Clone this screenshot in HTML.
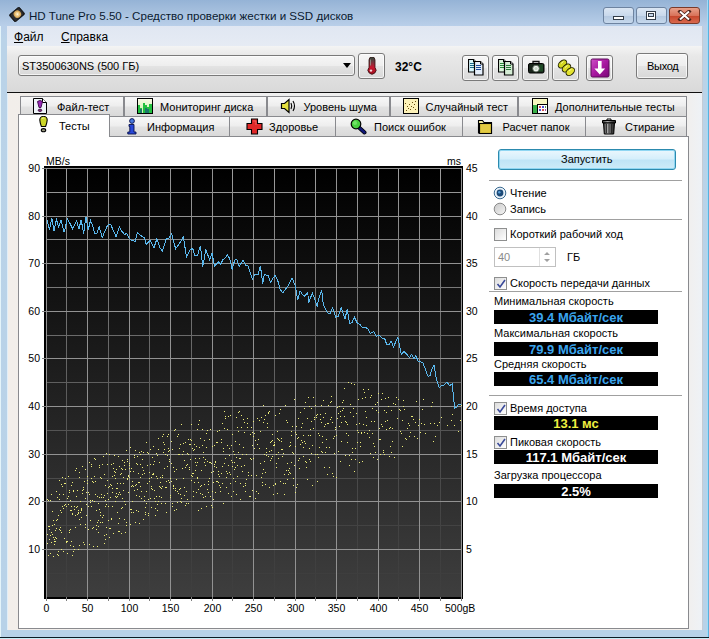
<!DOCTYPE html>
<html><head><meta charset="utf-8">
<style>
*{margin:0;padding:0;box-sizing:border-box}
html,body{width:709px;height:639px;overflow:hidden;background:#b9cde3;font-family:"Liberation Sans",sans-serif;font-size:11px;color:#000}
.a{position:absolute}
.t{position:absolute;white-space:nowrap;line-height:1}
#frame{left:0;top:0;width:709px;height:639px;background:linear-gradient(#95b3d6,#a6c0de 12px,#b9cfe9 26px,#bad3e8 40px,#b8d2e8)}
#client{left:7px;top:26px;width:695px;height:604px;background:linear-gradient(90deg,#e0eef8 1px,#f2eeea 1px,#f0f0f0 30%,#f0f0f0 70%,#f2eeea 97%,#eef2f6)}
#menubar{left:0;top:0;width:695px;height:20px;background:linear-gradient(#e0e7f2,#e6ebf4)}
#toolbar{left:0;top:20px;width:695px;height:46px;background:linear-gradient(#f4f4f4,#e8e8e8 10px,#d9d9d9)}
#dline{left:0;top:66px;width:695px;height:1px;background:#101010}
.btn{position:absolute;border:1px solid #7a7a7a;border-radius:3px;background:linear-gradient(#f6f6f6 0,#eeeeee 50%,#e4e4e4 51%,#d8d8d8 100%);box-shadow:inset 0 0 0 1px rgba(255,255,255,.7)}
.tab{position:absolute;border:1px solid #898a8e;border-bottom:none;background:linear-gradient(#f8f8f8,#eeeeee 45%,#e2e2e2 55%,#d9d9d9)}
.tab span{position:absolute;top:3.5px;white-space:nowrap}
.tab svg{position:absolute;top:1px}
#panel{left:18px;top:136px;width:671px;height:493px;background:#fff;border:1px solid #898a8e}
.sep{position:absolute;height:1px;background:#a0a0a0}
.blk{position:absolute;background:#000;color:#3aa5ee;font-weight:bold;font-size:13px;text-align:center;line-height:15px}
.cb{position:absolute;width:13px;height:13px;border:1px solid #8e8f8f;background:linear-gradient(135deg,#dcdcdc,#fff)}
</style></head><body>
<div id="frame" class="a"></div>
<div class="a" style="left:0;top:637px;width:709px;height:1px;background:#0c1c24"></div>
<div class="a" style="left:0;top:638px;width:709px;height:1px;background:#c8eef8"></div>
<div class="a" style="left:702px;top:26px;width:1px;height:604px;background:#c4ccd6"></div>
<div class="a" style="left:707px;top:0;width:1px;height:637px;background:#a0dcf8"></div>
<div class="a" style="left:708px;top:0;width:1px;height:637px;background:#5cb0dc"></div>
<div class="a" style="left:0;top:26px;width:1px;height:611px;background:#e4f4fa"></div>
<!-- title bar -->
<svg class="a" style="left:9px;top:7px" width="16" height="15" viewBox="0 0 16 15">
<g transform="rotate(-40 8 7.5)"><rect x="1.5" y="2.8" width="13" height="9.4" rx="1.2" fill="#1c1c1c" stroke="#000" stroke-width=".6"/>
<rect x="2.5" y="3.6" width="11" height="7.8" rx="1" fill="#2e2e30"/>
<circle cx="8.5" cy="7.5" r="3.7" fill="#d9a85a"/><circle cx="8.5" cy="7.5" r="2.4" fill="#f0d090"/><circle cx="8.5" cy="7.5" r=".9" fill="#fff6e0"/></g></svg>
<div class="t" style="left:29px;top:10px;font-size:11.6px;color:#0a1a30">HD Tune Pro 5.50 - Средство проверки жестки и SSD дисков</div>

<div class="a" style="left:603px;top:7px;width:31px;height:17px;border:1px solid #6d83a0;border-radius:3px;background:linear-gradient(#dbe6f3,#c9d9ec 50%,#b4c8e0 51%,#c6d8ec)"></div>
<div class="a" style="left:613px;top:16px;width:11px;height:4px;background:#fff;border:1px solid #333c48"></div>
<div class="a" style="left:636px;top:7px;width:31px;height:17px;border:1px solid #6d83a0;border-radius:3px;background:linear-gradient(#dbe6f3,#c9d9ec 50%,#b4c8e0 51%,#c6d8ec)"></div>
<div class="a" style="left:646px;top:11px;width:10px;height:9px;border:1px solid #333c48;background:#fff"></div>
<div class="a" style="left:648px;top:13px;width:6px;height:4px;border:1px solid #333c48;background:#c9d9ec"></div>
<div class="a" style="left:669px;top:7px;width:31px;height:17px;border:1px solid #7a3a2a;border-radius:3px;background:linear-gradient(#e8a08a,#d9735a 50%,#c5442a 51%,#d9694e)"></div>
<svg class="a" style="left:677px;top:10px" width="15" height="11" viewBox="0 0 15 11"><path d="M3 1.5 L12 9.5 M12 1.5 L3 9.5" stroke="#4a2018" stroke-width="3.6" stroke-linecap="square"/><path d="M3 1.5 L12 9.5 M12 1.5 L3 9.5" stroke="#fff" stroke-width="2"/></svg>

<div id="client" class="a">
  <div id="menubar" class="a">
    <div class="t" style="left:7px;top:5px;font-size:12px"><u>Ф</u>айл</div>
    <div class="t" style="left:54px;top:5px;font-size:12px"><u>С</u>правка</div>
  </div>
  <div id="toolbar" class="a"></div>
  <div id="dline" class="a"></div>
</div>
<div class="btn" style="left:18px;top:55px;width:337px;height:21px;border-color:#7a7a7a"></div><div class="t" style="left:22px;top:61px">ST3500630NS (500 ГБ)</div><svg class="a" style="left:343px;top:63px" width="9" height="6"><path d="M0 0H8L4 5z" fill="#000"/></svg><div class="btn" style="left:358px;top:53px;width:27px;height:26px"><svg class="a" style="left:8px;top:3px" width="10" height="18" viewBox="0 0 10 18"><defs><linearGradient id="thg" x1="0" y1="0" x2="0" y2="1"><stop offset="0" stop-color="#2a4a3a"/><stop offset=".25" stop-color="#6a3a40"/><stop offset=".6" stop-color="#c81830"/><stop offset="1" stop-color="#a01020"/></linearGradient></defs><path d="M2 3a3 3 0 0 1 6 0v7.5a4 4 0 1 1-6 0z" fill="url(#thg)" stroke="#301010" stroke-width=".8"/><path d="M3.5 2.5v6" stroke="#a0c0b0" stroke-width="1" opacity=".6"/><circle cx="4" cy="13.6" r="1.2" fill="#fff" opacity=".85"/></svg></div><div class="t" style="left:395px;top:61px;font-size:12px;font-weight:bold">32°C</div><div class="btn" style="left:462px;top:55px;width:27px;height:26px"><svg class="a" style="left:5px;top:3px" width="17" height="17" viewBox="0 0 17 17"><path d="M0.5 0.5h5l2.5 2.5v10h-7.5z" fill="#d8f6fc" stroke="#000" stroke-width="1.2"/><path d="M5.5 0.5v2.5h2.5" fill="#fff" stroke="#000" stroke-width="1"/><path d="M2 4.5h4" stroke="#1a6a8a" stroke-width="1"/><path d="M2 6.5h4" stroke="#1a6a8a" stroke-width="1"/><path d="M2 8.5h4" stroke="#1a6a8a" stroke-width="1"/><path d="M6.5 2.5h6l2.5 2.5v11h-8.5z" fill="#e4eefa" stroke="#000" stroke-width="1.2"/><path d="M12.5 2.5v2.5h2.5" fill="#fff" stroke="#000" stroke-width="1"/><path d="M8 6.5h5" stroke="#1a4a9a" stroke-width="1"/><path d="M8 8.5h5" stroke="#1a4a9a" stroke-width="1"/><path d="M8 10.5h5" stroke="#1a4a9a" stroke-width="1"/></svg></div><div class="btn" style="left:492px;top:55px;width:27px;height:26px"><svg class="a" style="left:5px;top:3px" width="17" height="17" viewBox="0 0 17 17"><path d="M0.5 0.5h5l2.5 2.5v10h-7.5z" fill="#dcf6dc" stroke="#000" stroke-width="1.2"/><path d="M5.5 0.5v2.5h2.5" fill="#fff" stroke="#000" stroke-width="1"/><path d="M2 4.5h4" stroke="#2a8a3a" stroke-width="1"/><path d="M2 6.5h4" stroke="#2a8a3a" stroke-width="1"/><path d="M2 8.5h4" stroke="#2a8a3a" stroke-width="1"/><path d="M6.5 2.5h6l2.5 2.5v11h-8.5z" fill="#d4ecd4" stroke="#000" stroke-width="1.2"/><path d="M12.5 2.5v2.5h2.5" fill="#fff" stroke="#000" stroke-width="1"/><path d="M8 6.5h5" stroke="#2a7a3a" stroke-width="1"/><path d="M8 8.5h5" stroke="#2a7a3a" stroke-width="1"/><path d="M8 10.5h5" stroke="#2a7a3a" stroke-width="1"/></svg></div><div class="btn" style="left:522px;top:55px;width:27px;height:26px"><svg class="a" style="left:5px;top:4px" width="17" height="14" viewBox="0 0 17 14"><path d="M5 3.5v-2h6v2" fill="none" stroke="#111" stroke-width="1.3"/><rect x="0.5" y="3.5" width="15.5" height="9.5" rx="1.5" fill="#18241a" stroke="#000"/><rect x="11" y="4.5" width="4" height="7" fill="#1e4a26"/><circle cx="8" cy="8.6" r="3.3" fill="#f0f4f0" stroke="#506050" stroke-width=".8"/><circle cx="8" cy="8.6" r="1.6" fill="#c8d8c8"/></svg></div><div class="btn" style="left:552px;top:55px;width:27px;height:26px"><svg class="a" style="left:4px;top:3px" width="19" height="18" viewBox="0 0 19 18"><g stroke="#202000" stroke-width="1"><ellipse cx="5.5" cy="5" rx="4.8" ry="3.2" transform="rotate(-40 5.5 5)" fill="#d4d820"/><ellipse cx="9.5" cy="9" rx="4.8" ry="3.2" transform="rotate(-40 9.5 9)" fill="#dcde28"/><ellipse cx="13.3" cy="12.6" rx="4.8" ry="3.2" transform="rotate(-40 13.3 12.6)" fill="#e4e430"/></g><path d="M4 4.5l2.5-2M8 8.5l2.5-2M12 12l2.5-2" stroke="#f8f8a0" stroke-width="1"/></svg></div><div class="btn" style="left:586px;top:55px;width:27px;height:26px"><svg class="a" style="left:3px;top:2px" width="20" height="20" viewBox="0 0 20 20"><defs><linearGradient id="pg" x1="0" y1="0" x2="1" y2="1"><stop offset="0" stop-color="#d050c8"/><stop offset=".5" stop-color="#a818a0"/><stop offset="1" stop-color="#7a0878"/></linearGradient></defs><rect x="1" y="1" width="18" height="18" rx="1.5" fill="url(#pg)" stroke="#5a0a58" stroke-width="1"/><path d="M8 3h3.6v7.5h3.6l-5.4 6-5.4-6h3.6z" fill="#fff"/></svg></div><div class="btn" style="left:636px;top:53px;width:52px;height:26px"><div class="t" style="left:10px;top:6.5px;letter-spacing:-0.3px">Выход</div></div>
<div id="panel" class="a"></div>
<div class="tab" style="left:20px;top:96px;width:104px;height:20px;"><svg style="left:12px;top:1px" width="15" height="16" viewBox="0 0 15 16"><path d="M0.5 0.5h9l4 4v11h-13z" fill="#eef4f8" stroke="#000"/><path d="M9.5 0.5v4h4" fill="#fff" stroke="#000"/><path d="M4.5 3.5q2.5-2 5 0l-1.5 6h-2z" fill="#9a2ab8" stroke="#3a0848" stroke-width=".9"/><ellipse cx="7" cy="12.3" rx="1.8" ry="1.2" fill="#7a3a6a" stroke="#3a0848" stroke-width=".8"/></svg><span style="left:36px">Файл-тест</span></div><div class="tab" style="left:124px;top:96px;width:143px;height:20px;"><svg style="left:12px;top:1px" width="16" height="16" viewBox="0 0 16 16" shape-rendering="crispEdges"><defs><linearGradient id="mg" x1="0" y1="0" x2="0" y2="1"><stop offset="0" stop-color="#fafae8"/><stop offset="1" stop-color="#c8f0a8"/></linearGradient></defs><rect x="0.5" y="0.5" width="15" height="15" fill="url(#mg)" stroke="#000"/><path d="M1 15V7h2v8zM3 15V10h2v5zM6 15V5h2v10zM8 15V7h2v8zM10 15V9h2v6zM12 15V6h3v9z" fill="#22c040"/><path d="M3 15v-4h2v4zM8 15v-5h2v5zM10 15v-4h2v4z" fill="#1a7a6a"/></svg><span style="left:35px">Мониторинг диска</span></div><div class="tab" style="left:267px;top:96px;width:123px;height:20px;"><svg style="left:12px;top:1px" width="17" height="16" viewBox="0 0 17 16"><path d="M1.5 5.5h3l4.5-4v13l-4.5-4h-3z" fill="#e4e040" stroke="#000" stroke-width="1.2"/><path d="M11 5q1.5 3 0 6M13 3q3 5 0 10" stroke="#000" stroke-width="1.1" fill="none"/></svg><span style="left:35.5px">Уровень шума</span></div><div class="tab" style="left:390px;top:96px;width:128px;height:20px;"><svg style="left:12px;top:1px" width="16" height="16" viewBox="0 0 16 16" shape-rendering="crispEdges"><rect x="0.5" y="0.5" width="15" height="15" fill="#fdf2b8" stroke="#000"/><g fill="#6a5010"><rect x="3" y="12" width="1" height="1"/><rect x="5" y="10" width="1" height="1"/><rect x="4" y="8" width="1" height="1"/><rect x="7" y="11" width="1" height="1"/><rect x="8" y="8" width="1" height="1"/><rect x="6" y="6" width="1" height="1"/><rect x="10" y="9" width="1" height="1"/><rect x="11" y="6" width="1" height="1"/><rect x="9" y="4" width="1" height="1"/><rect x="12" y="3" width="1" height="1"/><rect x="12" y="11" width="1" height="1"/><rect x="2" y="5" width="1" height="1"/></g></svg><span style="left:34.5px">Случайный тест</span></div><div class="tab" style="left:518px;top:96px;width:169px;height:20px;"><svg style="left:13px;top:1px" width="16" height="16" viewBox="0 0 16 16" shape-rendering="crispEdges"><rect x="0.5" y="0.5" width="15" height="15" fill="#f6f6c0" stroke="#000"/><rect x="1" y="7" width="5" height="8" fill="#38b048"/><rect x="5" y="6" width="10" height="9" fill="#fff" stroke="#000"/><g><rect x="7" y="8" width="2" height="2" fill="#d05050"/><rect x="10" y="8" width="2" height="2" fill="#5050d0"/><rect x="13" y="8" width="1" height="2" fill="#50a050"/><rect x="7" y="11" width="2" height="2" fill="#5050d0"/><rect x="10" y="11" width="2" height="2" fill="#d05050"/><rect x="13" y="11" width="1" height="2" fill="#a050a0"/></g></svg><span style="left:36px">Дополнительные тесты</span></div><div class="tab" style="left:109px;top:116px;width:121px;height:20px;"><svg style="left:17px;top:1px" width="10" height="17" viewBox="0 0 10 17"><circle cx="5" cy="3" r="2.4" fill="#4a7ae0" stroke="#08104a" stroke-width=".9"/><path d="M2 6.5h5v7.5h2v2H0.8v-2h2v-5.5H2z" fill="#2848d8" stroke="#08104a" stroke-width=".9"/></svg><span style="left:37px">Информация</span></div><div class="tab" style="left:229px;top:116px;width:107px;height:20px;"><svg style="left:16px;top:1px" width="17" height="17" viewBox="0 0 17 17"><path d="M5.5 1h6v4.5H16v6h-4.5V16h-6v-4.5H1v-6h4.5z" fill="#e02828" stroke="#000" stroke-width="1.1"/><path d="M7 3h3v4" stroke="#ff8080" stroke-width="1" fill="none" opacity=".6"/></svg><span style="left:39px">Здоровье</span></div><div class="tab" style="left:335px;top:116px;width:128px;height:20px;"><svg style="left:14px;top:1px" width="17" height="17" viewBox="0 0 17 17"><path d="M9 9.5l5.5 5" stroke="#000" stroke-width="4" stroke-linecap="round"/><path d="M9 9.5l5.5 5" stroke="#101878" stroke-width="2.4" stroke-linecap="round"/><circle cx="6" cy="6" r="4.8" fill="#48d040" stroke="#000" stroke-width="1.2"/><circle cx="5" cy="5" r="2" fill="#90f080" opacity=".6"/></svg><span style="left:38px">Поиск ошибок</span></div><div class="tab" style="left:462px;top:116px;width:124px;height:20px;"><svg style="left:14px;top:1px" width="16" height="17" viewBox="0 0 16 17"><path d="M1.5 2.5h4l1.5 2h7.5v10.5h-13z" fill="#f0e8a0" stroke="#000" stroke-width="1.1"/><path d="M2.5 15.5v-10h12v10z" fill="#d8c038" stroke="#000" stroke-width="1.1"/><rect x="4" y="7" width="9" height="7" fill="#e8d048" opacity=".7"/></svg><span style="left:39.5px">Расчет папок</span></div><div class="tab" style="left:585px;top:116px;width:102px;height:20px;"><svg style="left:16px;top:1px" width="14" height="17" viewBox="0 0 14 17"><defs><linearGradient id="tg" x1="0" y1="0" x2="1" y2="0"><stop offset="0" stop-color="#303030"/><stop offset=".4" stop-color="#b0b0b0"/><stop offset=".7" stop-color="#505050"/><stop offset="1" stop-color="#202020"/></linearGradient></defs><path d="M0.5 2.5h13v2.5h-13z" fill="url(#tg)" stroke="#000"/><path d="M5 2.5v-1.5h4v1.5" fill="none" stroke="#000"/><path d="M1.5 5h11l-0.8 11h-9.4z" fill="url(#tg)" stroke="#000"/><path d="M4.5 6v9M7 6v9M9.5 6v9" stroke="#202020" stroke-width=".8"/></svg><span style="left:39px">Стирание</span></div><div class="tab"  style="left:18px;top:114px;width:92px;height:23px;background:#fff;"><svg style="left:20px;top:1px" width="9" height="18" viewBox="0 0 9 18"><path d="M0.8 4a3.7 3.7 0 0 1 7.4 0q0 2-1.6 6.5h-4.2q-1.6-4.5-1.6-6.5z" fill="#ccd628" stroke="#000" stroke-width="1.1"/><path d="M2.8 3a1.5 1.5 0 0 1 2.5-.5" stroke="#f0f8a0" stroke-width="1" fill="none"/><ellipse cx="4.5" cy="14.2" rx="2.2" ry="1.6" fill="#9a9a80" stroke="#000" stroke-width="1.1"/></svg><span style="top:5px;left:40px">Тесты</span></div>
<svg class="a" style="left:0;top:0" width="709" height="639">
<defs><linearGradient id="bg" x1="0" y1="0" x2="0" y2="1"><stop offset="0" stop-color="#000"/><stop offset="1" stop-color="#3e3e3e"/></linearGradient><linearGradient id="ov" x1="0" y1="0" x2="0" y2="1"><stop offset="0" stop-color="#3e3e3e" stop-opacity="0"/><stop offset="1" stop-color="#3e3e3e" stop-opacity="1"/></linearGradient></defs>
<rect x="46" y="168" width="416" height="429" fill="url(#bg)"/>
<defs><linearGradient id="mv" gradientUnits="userSpaceOnUse" x1="0" y1="168" x2="0" y2="597"><stop offset="0.0" stop-color="#9e9e9e"/><stop offset="0.1" stop-color="#909090"/><stop offset="0.2" stop-color="#838383"/><stop offset="0.3" stop-color="#767676"/><stop offset="0.4" stop-color="#6a6a6a"/><stop offset="0.5" stop-color="#5f5f5f"/><stop offset="0.6" stop-color="#555555"/><stop offset="0.7" stop-color="#4c4c4c"/><stop offset="0.8" stop-color="#454545"/><stop offset="0.9" stop-color="#404040"/><stop offset="1.0" stop-color="#3e3e3e"/></linearGradient></defs>
<line x1="66.5" y1="168" x2="66.5" y2="597" stroke="url(#mv)" stroke-width="1"/>
<line x1="108.5" y1="168" x2="108.5" y2="597" stroke="url(#mv)" stroke-width="1"/>
<line x1="149.5" y1="168" x2="149.5" y2="597" stroke="url(#mv)" stroke-width="1"/>
<line x1="191.5" y1="168" x2="191.5" y2="597" stroke="url(#mv)" stroke-width="1"/>
<line x1="232.5" y1="168" x2="232.5" y2="597" stroke="url(#mv)" stroke-width="1"/>
<line x1="274.5" y1="168" x2="274.5" y2="597" stroke="url(#mv)" stroke-width="1"/>
<line x1="315.5" y1="168" x2="315.5" y2="597" stroke="url(#mv)" stroke-width="1"/>
<line x1="357.5" y1="168" x2="357.5" y2="597" stroke="url(#mv)" stroke-width="1"/>
<line x1="398.5" y1="168" x2="398.5" y2="597" stroke="url(#mv)" stroke-width="1"/>
<line x1="440.5" y1="168" x2="440.5" y2="597" stroke="url(#mv)" stroke-width="1"/>
<line x1="46" y1="192.5" x2="462" y2="192.5" stroke="#969696" stroke-width="1"/>
<line x1="46" y1="239.5" x2="462" y2="239.5" stroke="#878787" stroke-width="1"/>
<line x1="46" y1="287.5" x2="462" y2="287.5" stroke="#797979" stroke-width="1"/>
<line x1="46" y1="335.5" x2="462" y2="335.5" stroke="#6b6b6b" stroke-width="1"/>
<line x1="46" y1="382.5" x2="462" y2="382.5" stroke="#5f5f5f" stroke-width="1"/>
<line x1="46" y1="430.5" x2="462" y2="430.5" stroke="#545454" stroke-width="1"/>
<line x1="46" y1="478.5" x2="462" y2="478.5" stroke="#4b4b4b" stroke-width="1"/>
<line x1="46" y1="525.5" x2="462" y2="525.5" stroke="#434343" stroke-width="1"/>
<line x1="46" y1="573.5" x2="462" y2="573.5" stroke="#3e3e3e" stroke-width="1"/>
<line x1="46.5" y1="168" x2="46.5" y2="597" stroke="#929292" stroke-width="1"/>
<line x1="87.5" y1="168" x2="87.5" y2="597" stroke="#929292" stroke-width="1"/>
<line x1="129.5" y1="168" x2="129.5" y2="597" stroke="#929292" stroke-width="1"/>
<line x1="170.5" y1="168" x2="170.5" y2="597" stroke="#929292" stroke-width="1"/>
<line x1="212.5" y1="168" x2="212.5" y2="597" stroke="#929292" stroke-width="1"/>
<line x1="253.5" y1="168" x2="253.5" y2="597" stroke="#929292" stroke-width="1"/>
<line x1="295.5" y1="168" x2="295.5" y2="597" stroke="#929292" stroke-width="1"/>
<line x1="336.5" y1="168" x2="336.5" y2="597" stroke="#929292" stroke-width="1"/>
<line x1="378.5" y1="168" x2="378.5" y2="597" stroke="#929292" stroke-width="1"/>
<line x1="419.5" y1="168" x2="419.5" y2="597" stroke="#929292" stroke-width="1"/>
<line x1="461.5" y1="168" x2="461.5" y2="597" stroke="#929292" stroke-width="1"/>
<line x1="46" y1="168.5" x2="462" y2="168.5" stroke="#929292" stroke-width="1"/>
<line x1="46" y1="216.5" x2="462" y2="216.5" stroke="#929292" stroke-width="1"/>
<line x1="46" y1="263.5" x2="462" y2="263.5" stroke="#929292" stroke-width="1"/>
<line x1="46" y1="311.5" x2="462" y2="311.5" stroke="#929292" stroke-width="1"/>
<line x1="46" y1="358.5" x2="462" y2="358.5" stroke="#929292" stroke-width="1"/>
<line x1="46" y1="406.5" x2="462" y2="406.5" stroke="#929292" stroke-width="1"/>
<line x1="46" y1="454.5" x2="462" y2="454.5" stroke="#929292" stroke-width="1"/>
<line x1="46" y1="501.5" x2="462" y2="501.5" stroke="#929292" stroke-width="1"/>
<line x1="46" y1="549.5" x2="462" y2="549.5" stroke="#929292" stroke-width="1"/>
<line x1="46" y1="597.5" x2="462" y2="597.5" stroke="#929292" stroke-width="1"/>
<rect x="44" y="166" width="2" height="433" fill="#000"/>
<rect x="44" y="166" width="419" height="2" fill="#000"/>
<rect x="44" y="597" width="419" height="2" fill="#000"/>
<rect x="462" y="166" width="1" height="433" fill="#000"/>
<line x1="42" y1="168.5" x2="46" y2="168.5" stroke="#808080"/>
<line x1="42" y1="216.5" x2="46" y2="216.5" stroke="#808080"/>
<line x1="42" y1="263.5" x2="46" y2="263.5" stroke="#808080"/>
<line x1="42" y1="311.5" x2="46" y2="311.5" stroke="#808080"/>
<line x1="42" y1="358.5" x2="46" y2="358.5" stroke="#808080"/>
<line x1="42" y1="406.5" x2="46" y2="406.5" stroke="#808080"/>
<line x1="42" y1="454.5" x2="46" y2="454.5" stroke="#808080"/>
<line x1="42" y1="501.5" x2="46" y2="501.5" stroke="#808080"/>
<line x1="42" y1="549.5" x2="46" y2="549.5" stroke="#808080"/>
<line x1="46.5" y1="597" x2="46.5" y2="601" stroke="#808080"/>
<line x1="66.5" y1="597" x2="66.5" y2="601" stroke="#808080"/>
<line x1="87.5" y1="597" x2="87.5" y2="601" stroke="#808080"/>
<line x1="108.5" y1="597" x2="108.5" y2="601" stroke="#808080"/>
<line x1="129.5" y1="597" x2="129.5" y2="601" stroke="#808080"/>
<line x1="149.5" y1="597" x2="149.5" y2="601" stroke="#808080"/>
<line x1="170.5" y1="597" x2="170.5" y2="601" stroke="#808080"/>
<line x1="191.5" y1="597" x2="191.5" y2="601" stroke="#808080"/>
<line x1="212.5" y1="597" x2="212.5" y2="601" stroke="#808080"/>
<line x1="232.5" y1="597" x2="232.5" y2="601" stroke="#808080"/>
<line x1="253.5" y1="597" x2="253.5" y2="601" stroke="#808080"/>
<line x1="274.5" y1="597" x2="274.5" y2="601" stroke="#808080"/>
<line x1="295.5" y1="597" x2="295.5" y2="601" stroke="#808080"/>
<line x1="315.5" y1="597" x2="315.5" y2="601" stroke="#808080"/>
<line x1="336.5" y1="597" x2="336.5" y2="601" stroke="#808080"/>
<line x1="357.5" y1="597" x2="357.5" y2="601" stroke="#808080"/>
<line x1="378.5" y1="597" x2="378.5" y2="601" stroke="#808080"/>
<line x1="398.5" y1="597" x2="398.5" y2="601" stroke="#808080"/>
<line x1="419.5" y1="597" x2="419.5" y2="601" stroke="#808080"/>
<line x1="440.5" y1="597" x2="440.5" y2="601" stroke="#808080"/>
<line x1="461.5" y1="597" x2="461.5" y2="601" stroke="#808080"/>
<path d="M47 543h1v1h-1zM47 534h1v1h-1zM47 499h1v1h-1zM48 526h1v1h-1zM48 500h1v1h-1zM48 555h1v1h-1zM49 539h1v1h-1zM49 529h1v1h-1zM49 526h1v1h-1zM50 500h1v1h-1zM50 553h1v1h-1zM50 535h1v1h-1zM51 532h1v1h-1zM51 494h1v1h-1zM51 542h1v1h-1zM52 534h1v1h-1zM52 511h1v1h-1zM52 525h1v1h-1zM53 556h1v1h-1zM53 537h1v1h-1zM53 520h1v1h-1zM54 524h1v1h-1zM54 539h1v1h-1zM54 544h1v1h-1zM54 541h1v1h-1zM55 537h1v1h-1zM55 530h1v1h-1zM55 541h1v1h-1zM56 528h1v1h-1zM56 538h1v1h-1zM56 520h1v1h-1zM56 491h1v1h-1zM57 497h1v1h-1zM57 554h1v1h-1zM57 519h1v1h-1zM58 551h1v1h-1zM58 515h1v1h-1zM58 555h1v1h-1zM59 494h1v1h-1zM59 499h1v1h-1zM59 529h1v1h-1zM59 480h1v1h-1zM60 527h1v1h-1zM60 530h1v1h-1zM60 510h1v1h-1zM61 549h1v1h-1zM61 512h1v1h-1zM61 532h1v1h-1zM61 484h1v1h-1zM62 506h1v1h-1zM62 477h1v1h-1zM62 486h1v1h-1zM63 551h1v1h-1zM63 494h1v1h-1zM63 508h1v1h-1zM64 538h1v1h-1zM64 483h1v1h-1zM64 505h1v1h-1zM65 483h1v1h-1zM65 504h1v1h-1zM65 478h1v1h-1zM66 542h1v1h-1zM66 506h1v1h-1zM66 541h1v1h-1zM67 498h1v1h-1zM67 553h1v1h-1zM67 541h1v1h-1zM68 504h1v1h-1zM68 476h1v1h-1zM68 496h1v1h-1zM69 532h1v1h-1zM69 530h1v1h-1zM69 492h1v1h-1zM69 490h1v1h-1zM70 529h1v1h-1zM70 510h1v1h-1zM70 545h1v1h-1zM70 500h1v1h-1zM71 541h1v1h-1zM71 506h1v1h-1zM71 510h1v1h-1zM71 485h1v1h-1zM72 513h1v1h-1zM72 514h1v1h-1zM72 482h1v1h-1zM72 555h1v1h-1zM73 551h1v1h-1zM73 546h1v1h-1zM73 490h1v1h-1zM73 491h1v1h-1zM74 506h1v1h-1zM74 549h1v1h-1zM74 509h1v1h-1zM75 527h1v1h-1zM75 515h1v1h-1zM75 470h1v1h-1zM76 468h1v1h-1zM76 496h1v1h-1zM76 507h1v1h-1zM77 506h1v1h-1zM77 490h1v1h-1zM77 514h1v1h-1zM78 513h1v1h-1zM78 512h1v1h-1zM78 510h1v1h-1zM78 549h1v1h-1zM79 519h1v1h-1zM79 545h1v1h-1zM79 477h1v1h-1zM79 472h1v1h-1zM80 524h1v1h-1zM80 512h1v1h-1zM80 501h1v1h-1zM81 517h1v1h-1zM81 508h1v1h-1zM81 509h1v1h-1zM81 510h1v1h-1zM82 493h1v1h-1zM82 490h1v1h-1zM82 466h1v1h-1zM83 489h1v1h-1zM83 542h1v1h-1zM83 487h1v1h-1zM84 481h1v1h-1zM84 544h1v1h-1zM84 481h1v1h-1zM85 498h1v1h-1zM85 524h1v1h-1zM85 469h1v1h-1zM85 527h1v1h-1zM86 504h1v1h-1zM86 492h1v1h-1zM86 515h1v1h-1zM87 483h1v1h-1zM87 476h1v1h-1zM87 480h1v1h-1zM88 529h1v1h-1zM88 506h1v1h-1zM88 492h1v1h-1zM89 462h1v1h-1zM89 494h1v1h-1zM89 544h1v1h-1zM90 502h1v1h-1zM90 500h1v1h-1zM90 520h1v1h-1zM91 506h1v1h-1zM91 464h1v1h-1zM91 466h1v1h-1zM91 478h1v1h-1zM92 528h1v1h-1zM92 481h1v1h-1zM92 500h1v1h-1zM93 482h1v1h-1zM93 527h1v1h-1zM93 546h1v1h-1zM94 458h1v1h-1zM94 501h1v1h-1zM94 476h1v1h-1zM95 481h1v1h-1zM95 494h1v1h-1zM95 459h1v1h-1zM96 510h1v1h-1zM96 525h1v1h-1zM96 529h1v1h-1zM97 546h1v1h-1zM97 522h1v1h-1zM97 496h1v1h-1zM98 526h1v1h-1zM98 503h1v1h-1zM98 532h1v1h-1zM98 520h1v1h-1zM99 497h1v1h-1zM99 467h1v1h-1zM99 465h1v1h-1zM99 509h1v1h-1zM100 477h1v1h-1zM100 512h1v1h-1zM100 515h1v1h-1zM100 522h1v1h-1zM101 478h1v1h-1zM101 497h1v1h-1zM101 494h1v1h-1zM102 517h1v1h-1zM102 464h1v1h-1zM102 522h1v1h-1zM103 456h1v1h-1zM103 515h1v1h-1zM103 497h1v1h-1zM104 495h1v1h-1zM104 535h1v1h-1zM104 543h1v1h-1zM104 474h1v1h-1zM105 485h1v1h-1zM105 539h1v1h-1zM105 506h1v1h-1zM105 500h1v1h-1zM106 527h1v1h-1zM106 534h1v1h-1zM106 504h1v1h-1zM106 453h1v1h-1zM107 493h1v1h-1zM107 464h1v1h-1zM107 480h1v1h-1zM108 520h1v1h-1zM108 499h1v1h-1zM108 506h1v1h-1zM108 487h1v1h-1zM109 486h1v1h-1zM109 454h1v1h-1zM109 528h1v1h-1zM109 537h1v1h-1zM110 497h1v1h-1zM110 484h1v1h-1zM110 528h1v1h-1zM111 518h1v1h-1zM111 485h1v1h-1zM111 519h1v1h-1zM111 464h1v1h-1zM112 492h1v1h-1zM112 476h1v1h-1zM112 506h1v1h-1zM112 488h1v1h-1zM113 463h1v1h-1zM113 533h1v1h-1zM113 468h1v1h-1zM114 475h1v1h-1zM114 455h1v1h-1zM114 455h1v1h-1zM114 471h1v1h-1zM115 501h1v1h-1zM115 496h1v1h-1zM115 478h1v1h-1zM115 472h1v1h-1zM116 493h1v1h-1zM116 497h1v1h-1zM116 469h1v1h-1zM116 488h1v1h-1zM117 488h1v1h-1zM117 512h1v1h-1zM117 496h1v1h-1zM117 483h1v1h-1zM118 531h1v1h-1zM118 456h1v1h-1zM118 494h1v1h-1zM118 523h1v1h-1zM119 492h1v1h-1zM119 518h1v1h-1zM119 531h1v1h-1zM119 466h1v1h-1zM120 483h1v1h-1zM120 494h1v1h-1zM120 474h1v1h-1zM121 473h1v1h-1zM121 533h1v1h-1zM121 508h1v1h-1zM121 468h1v1h-1zM122 460h1v1h-1zM122 507h1v1h-1zM122 469h1v1h-1zM122 498h1v1h-1zM123 483h1v1h-1zM123 490h1v1h-1zM123 477h1v1h-1zM124 519h1v1h-1zM124 465h1v1h-1zM124 501h1v1h-1zM124 462h1v1h-1zM125 504h1v1h-1zM125 469h1v1h-1zM125 532h1v1h-1zM126 450h1v1h-1zM126 525h1v1h-1zM126 522h1v1h-1zM127 461h1v1h-1zM127 479h1v1h-1zM127 478h1v1h-1zM127 459h1v1h-1zM128 475h1v1h-1zM128 492h1v1h-1zM128 476h1v1h-1zM129 465h1v1h-1zM129 477h1v1h-1zM129 468h1v1h-1zM129 463h1v1h-1zM130 447h1v1h-1zM130 524h1v1h-1zM130 509h1v1h-1zM130 471h1v1h-1zM131 486h1v1h-1zM131 468h1v1h-1zM131 509h1v1h-1zM131 512h1v1h-1zM132 485h1v1h-1zM132 501h1v1h-1zM132 481h1v1h-1zM133 486h1v1h-1zM133 512h1v1h-1zM133 471h1v1h-1zM134 455h1v1h-1zM134 457h1v1h-1zM134 490h1v1h-1zM135 522h1v1h-1zM135 450h1v1h-1zM135 485h1v1h-1zM136 463h1v1h-1zM136 495h1v1h-1zM136 510h1v1h-1zM136 484h1v1h-1zM137 489h1v1h-1zM137 464h1v1h-1zM137 456h1v1h-1zM138 473h1v1h-1zM138 473h1v1h-1zM138 511h1v1h-1zM138 482h1v1h-1zM139 482h1v1h-1zM139 452h1v1h-1zM139 523h1v1h-1zM139 496h1v1h-1zM140 464h1v1h-1zM140 486h1v1h-1zM140 477h1v1h-1zM140 454h1v1h-1zM141 491h1v1h-1zM141 451h1v1h-1zM141 498h1v1h-1zM142 459h1v1h-1zM142 467h1v1h-1zM142 474h1v1h-1zM143 452h1v1h-1zM143 470h1v1h-1zM143 519h1v1h-1zM144 473h1v1h-1zM144 496h1v1h-1zM144 500h1v1h-1zM145 514h1v1h-1zM145 507h1v1h-1zM145 512h1v1h-1zM146 442h1v1h-1zM146 503h1v1h-1zM146 491h1v1h-1zM147 452h1v1h-1zM147 483h1v1h-1zM147 465h1v1h-1zM148 453h1v1h-1zM148 499h1v1h-1zM148 515h1v1h-1zM148 513h1v1h-1zM149 478h1v1h-1zM149 472h1v1h-1zM149 481h1v1h-1zM149 472h1v1h-1zM150 449h1v1h-1zM150 498h1v1h-1zM150 464h1v1h-1zM151 507h1v1h-1zM151 488h1v1h-1zM151 477h1v1h-1zM151 486h1v1h-1zM152 474h1v1h-1zM152 489h1v1h-1zM152 457h1v1h-1zM153 464h1v1h-1zM153 446h1v1h-1zM153 473h1v1h-1zM153 474h1v1h-1zM154 490h1v1h-1zM154 498h1v1h-1zM154 461h1v1h-1zM155 515h1v1h-1zM155 508h1v1h-1zM155 501h1v1h-1zM156 496h1v1h-1zM156 476h1v1h-1zM156 453h1v1h-1zM157 510h1v1h-1zM157 504h1v1h-1zM157 478h1v1h-1zM157 455h1v1h-1zM158 438h1v1h-1zM158 449h1v1h-1zM158 501h1v1h-1zM159 462h1v1h-1zM159 486h1v1h-1zM159 496h1v1h-1zM160 477h1v1h-1zM160 487h1v1h-1zM160 482h1v1h-1zM161 497h1v1h-1zM161 503h1v1h-1zM161 488h1v1h-1zM162 475h1v1h-1zM162 436h1v1h-1zM162 486h1v1h-1zM162 477h1v1h-1zM163 452h1v1h-1zM163 434h1v1h-1zM163 442h1v1h-1zM163 452h1v1h-1zM164 468h1v1h-1zM164 444h1v1h-1zM164 449h1v1h-1zM165 503h1v1h-1zM165 454h1v1h-1zM165 487h1v1h-1zM166 487h1v1h-1zM166 512h1v1h-1zM166 481h1v1h-1zM167 466h1v1h-1zM167 436h1v1h-1zM167 455h1v1h-1zM168 448h1v1h-1zM168 480h1v1h-1zM168 451h1v1h-1zM168 434h1v1h-1zM169 461h1v1h-1zM169 482h1v1h-1zM169 459h1v1h-1zM169 450h1v1h-1zM170 495h1v1h-1zM170 497h1v1h-1zM170 478h1v1h-1zM171 463h1v1h-1zM171 481h1v1h-1zM171 441h1v1h-1zM172 503h1v1h-1zM172 506h1v1h-1zM172 449h1v1h-1zM173 488h1v1h-1zM173 486h1v1h-1zM173 485h1v1h-1zM173 467h1v1h-1zM174 471h1v1h-1zM174 430h1v1h-1zM174 510h1v1h-1zM175 429h1v1h-1zM175 488h1v1h-1zM175 490h1v1h-1zM176 479h1v1h-1zM176 469h1v1h-1zM176 509h1v1h-1zM177 436h1v1h-1zM177 502h1v1h-1zM177 491h1v1h-1zM178 434h1v1h-1zM178 493h1v1h-1zM178 454h1v1h-1zM179 448h1v1h-1zM179 489h1v1h-1zM179 454h1v1h-1zM180 501h1v1h-1zM180 444h1v1h-1zM180 494h1v1h-1zM180 488h1v1h-1zM181 502h1v1h-1zM181 498h1v1h-1zM181 424h1v1h-1zM182 468h1v1h-1zM182 468h1v1h-1zM182 454h1v1h-1zM183 478h1v1h-1zM183 443h1v1h-1zM183 451h1v1h-1zM184 495h1v1h-1zM184 487h1v1h-1zM184 460h1v1h-1zM185 467h1v1h-1zM185 442h1v1h-1zM185 505h1v1h-1zM186 503h1v1h-1zM186 465h1v1h-1zM186 491h1v1h-1zM187 453h1v1h-1zM187 499h1v1h-1zM187 464h1v1h-1zM188 454h1v1h-1zM188 503h1v1h-1zM188 439h1v1h-1zM189 467h1v1h-1zM189 444h1v1h-1zM189 469h1v1h-1zM190 439h1v1h-1zM190 459h1v1h-1zM190 444h1v1h-1zM191 475h1v1h-1zM191 480h1v1h-1zM191 440h1v1h-1zM191 424h1v1h-1zM192 476h1v1h-1zM192 448h1v1h-1zM192 473h1v1h-1zM193 473h1v1h-1zM193 450h1v1h-1zM193 496h1v1h-1zM193 491h1v1h-1zM194 449h1v1h-1zM194 444h1v1h-1zM194 482h1v1h-1zM195 462h1v1h-1zM195 470h1v1h-1zM195 458h1v1h-1zM196 465h1v1h-1zM196 446h1v1h-1zM196 492h1v1h-1zM197 429h1v1h-1zM197 477h1v1h-1zM197 478h1v1h-1zM197 462h1v1h-1zM198 482h1v1h-1zM198 489h1v1h-1zM198 510h1v1h-1zM198 424h1v1h-1zM199 420h1v1h-1zM199 458h1v1h-1zM199 447h1v1h-1zM200 486h1v1h-1zM200 493h1v1h-1zM200 438h1v1h-1zM201 485h1v1h-1zM201 470h1v1h-1zM201 508h1v1h-1zM202 494h1v1h-1zM202 445h1v1h-1zM202 429h1v1h-1zM203 497h1v1h-1zM203 452h1v1h-1zM203 457h1v1h-1zM204 484h1v1h-1zM204 440h1v1h-1zM204 462h1v1h-1zM205 465h1v1h-1zM205 459h1v1h-1zM205 496h1v1h-1zM206 447h1v1h-1zM206 506h1v1h-1zM206 433h1v1h-1zM207 489h1v1h-1zM207 430h1v1h-1zM207 461h1v1h-1zM208 484h1v1h-1zM208 492h1v1h-1zM208 481h1v1h-1zM209 478h1v1h-1zM209 439h1v1h-1zM209 462h1v1h-1zM210 429h1v1h-1zM210 462h1v1h-1zM210 496h1v1h-1zM211 463h1v1h-1zM211 472h1v1h-1zM211 505h1v1h-1zM212 446h1v1h-1zM212 491h1v1h-1zM212 507h1v1h-1zM213 499h1v1h-1zM213 482h1v1h-1zM213 471h1v1h-1zM214 464h1v1h-1zM214 445h1v1h-1zM214 466h1v1h-1zM215 492h1v1h-1zM215 461h1v1h-1zM215 462h1v1h-1zM216 467h1v1h-1zM216 442h1v1h-1zM216 481h1v1h-1zM217 481h1v1h-1zM217 442h1v1h-1zM217 431h1v1h-1zM218 482h1v1h-1zM218 471h1v1h-1zM218 474h1v1h-1zM219 476h1v1h-1zM219 485h1v1h-1zM219 430h1v1h-1zM220 487h1v1h-1zM220 491h1v1h-1zM221 439h1v1h-1zM221 442h1v1h-1zM221 473h1v1h-1zM222 466h1v1h-1zM222 423h1v1h-1zM222 483h1v1h-1zM223 448h1v1h-1zM223 503h1v1h-1zM223 451h1v1h-1zM224 428h1v1h-1zM224 411h1v1h-1zM224 463h1v1h-1zM225 418h1v1h-1zM225 458h1v1h-1zM225 416h1v1h-1zM226 487h1v1h-1zM226 471h1v1h-1zM226 477h1v1h-1zM227 445h1v1h-1zM227 473h1v1h-1zM227 429h1v1h-1zM228 493h1v1h-1zM228 416h1v1h-1zM228 465h1v1h-1zM229 455h1v1h-1zM229 472h1v1h-1zM229 448h1v1h-1zM230 474h1v1h-1zM230 415h1v1h-1zM230 483h1v1h-1zM231 496h1v1h-1zM231 445h1v1h-1zM231 460h1v1h-1zM232 462h1v1h-1zM232 434h1v1h-1zM232 466h1v1h-1zM233 451h1v1h-1zM233 478h1v1h-1zM233 491h1v1h-1zM234 469h1v1h-1zM234 462h1v1h-1zM234 454h1v1h-1zM235 467h1v1h-1zM235 441h1v1h-1zM235 481h1v1h-1zM236 417h1v1h-1zM236 457h1v1h-1zM236 494h1v1h-1zM237 465h1v1h-1zM237 427h1v1h-1zM237 476h1v1h-1zM238 452h1v1h-1zM238 412h1v1h-1zM238 431h1v1h-1zM239 444h1v1h-1zM239 458h1v1h-1zM239 411h1v1h-1zM240 458h1v1h-1zM240 483h1v1h-1zM240 499h1v1h-1zM241 466h1v1h-1zM241 427h1v1h-1zM241 415h1v1h-1zM242 471h1v1h-1zM242 454h1v1h-1zM243 419h1v1h-1zM243 447h1v1h-1zM243 486h1v1h-1zM244 422h1v1h-1zM244 465h1v1h-1zM244 432h1v1h-1zM245 491h1v1h-1zM245 483h1v1h-1zM245 485h1v1h-1zM246 479h1v1h-1zM246 454h1v1h-1zM247 427h1v1h-1zM247 418h1v1h-1zM247 423h1v1h-1zM248 472h1v1h-1zM248 475h1v1h-1zM249 496h1v1h-1zM249 496h1v1h-1zM250 434h1v1h-1zM250 496h1v1h-1zM250 458h1v1h-1zM251 459h1v1h-1zM251 427h1v1h-1zM251 475h1v1h-1zM252 490h1v1h-1zM252 445h1v1h-1zM252 432h1v1h-1zM253 421h1v1h-1zM253 436h1v1h-1zM253 458h1v1h-1zM254 448h1v1h-1zM254 433h1v1h-1zM255 440h1v1h-1zM255 498h1v1h-1zM256 491h1v1h-1zM256 475h1v1h-1zM257 444h1v1h-1zM257 418h1v1h-1zM258 439h1v1h-1zM258 493h1v1h-1zM259 420h1v1h-1zM259 448h1v1h-1zM260 463h1v1h-1zM260 431h1v1h-1zM261 477h1v1h-1zM261 417h1v1h-1zM262 473h1v1h-1zM262 482h1v1h-1zM262 485h1v1h-1zM263 405h1v1h-1zM263 469h1v1h-1zM263 422h1v1h-1zM264 419h1v1h-1zM264 461h1v1h-1zM264 454h1v1h-1zM265 415h1v1h-1zM265 484h1v1h-1zM265 472h1v1h-1zM266 448h1v1h-1zM266 452h1v1h-1zM266 455h1v1h-1zM267 423h1v1h-1zM267 427h1v1h-1zM268 412h1v1h-1zM268 413h1v1h-1zM268 456h1v1h-1zM269 487h1v1h-1zM269 411h1v1h-1zM269 451h1v1h-1zM270 442h1v1h-1zM270 460h1v1h-1zM271 458h1v1h-1zM271 450h1v1h-1zM271 441h1v1h-1zM272 440h1v1h-1zM272 456h1v1h-1zM272 434h1v1h-1zM273 485h1v1h-1zM273 445h1v1h-1zM273 494h1v1h-1zM274 442h1v1h-1zM274 445h1v1h-1zM274 444h1v1h-1zM275 415h1v1h-1zM275 484h1v1h-1zM275 483h1v1h-1zM276 463h1v1h-1zM276 467h1v1h-1zM276 454h1v1h-1zM277 438h1v1h-1zM277 493h1v1h-1zM277 431h1v1h-1zM278 458h1v1h-1zM278 439h1v1h-1zM278 452h1v1h-1zM279 413h1v1h-1zM279 440h1v1h-1zM280 409h1v1h-1zM280 481h1v1h-1zM281 441h1v1h-1zM281 449h1v1h-1zM281 438h1v1h-1zM282 449h1v1h-1zM282 456h1v1h-1zM283 483h1v1h-1zM283 453h1v1h-1zM284 494h1v1h-1zM284 474h1v1h-1zM285 483h1v1h-1zM285 405h1v1h-1zM286 470h1v1h-1zM286 420h1v1h-1zM287 422h1v1h-1zM287 463h1v1h-1zM287 479h1v1h-1zM288 470h1v1h-1zM288 474h1v1h-1zM289 446h1v1h-1zM289 472h1v1h-1zM289 468h1v1h-1zM290 473h1v1h-1zM290 445h1v1h-1zM290 442h1v1h-1zM291 435h1v1h-1zM291 431h1v1h-1zM291 462h1v1h-1zM292 426h1v1h-1zM292 452h1v1h-1zM293 485h1v1h-1zM293 478h1v1h-1zM293 453h1v1h-1zM294 399h1v1h-1zM294 465h1v1h-1zM295 492h1v1h-1zM295 446h1v1h-1zM295 432h1v1h-1zM296 487h1v1h-1zM296 426h1v1h-1zM296 434h1v1h-1zM297 484h1v1h-1zM297 438h1v1h-1zM298 437h1v1h-1zM298 418h1v1h-1zM298 460h1v1h-1zM299 468h1v1h-1zM299 458h1v1h-1zM300 444h1v1h-1zM300 412h1v1h-1zM301 440h1v1h-1zM301 427h1v1h-1zM302 442h1v1h-1zM302 423h1v1h-1zM303 435h1v1h-1zM303 447h1v1h-1zM303 456h1v1h-1zM304 441h1v1h-1zM304 408h1v1h-1zM305 402h1v1h-1zM305 443h1v1h-1zM305 461h1v1h-1zM306 467h1v1h-1zM306 462h1v1h-1zM307 418h1v1h-1zM307 479h1v1h-1zM308 435h1v1h-1zM308 397h1v1h-1zM309 459h1v1h-1zM309 406h1v1h-1zM309 448h1v1h-1zM310 435h1v1h-1zM310 461h1v1h-1zM310 429h1v1h-1zM311 421h1v1h-1zM311 453h1v1h-1zM311 408h1v1h-1zM312 485h1v1h-1zM312 445h1v1h-1zM313 428h1v1h-1zM313 397h1v1h-1zM314 419h1v1h-1zM314 417h1v1h-1zM315 454h1v1h-1zM315 405h1v1h-1zM316 415h1v1h-1zM316 417h1v1h-1zM317 414h1v1h-1zM317 454h1v1h-1zM317 481h1v1h-1zM318 433h1v1h-1zM318 457h1v1h-1zM319 435h1v1h-1zM319 447h1v1h-1zM320 419h1v1h-1zM320 414h1v1h-1zM321 451h1v1h-1zM321 422h1v1h-1zM321 405h1v1h-1zM322 452h1v1h-1zM322 442h1v1h-1zM322 436h1v1h-1zM323 417h1v1h-1zM323 400h1v1h-1zM324 426h1v1h-1zM324 467h1v1h-1zM325 413h1v1h-1zM325 452h1v1h-1zM325 424h1v1h-1zM326 439h1v1h-1zM326 447h1v1h-1zM327 474h1v1h-1zM327 423h1v1h-1zM328 405h1v1h-1zM328 423h1v1h-1zM329 447h1v1h-1zM329 467h1v1h-1zM330 419h1v1h-1zM330 402h1v1h-1zM331 401h1v1h-1zM331 417h1v1h-1zM331 396h1v1h-1zM332 473h1v1h-1zM332 422h1v1h-1zM333 438h1v1h-1zM333 476h1v1h-1zM334 453h1v1h-1zM334 436h1v1h-1zM335 429h1v1h-1zM335 427h1v1h-1zM336 435h1v1h-1zM336 477h1v1h-1zM337 407h1v1h-1zM337 418h1v1h-1zM338 413h1v1h-1zM338 451h1v1h-1zM339 406h1v1h-1zM339 426h1v1h-1zM340 411h1v1h-1zM340 416h1v1h-1zM340 461h1v1h-1zM341 422h1v1h-1zM341 441h1v1h-1zM342 410h1v1h-1zM342 402h1v1h-1zM343 400h1v1h-1zM343 408h1v1h-1zM344 416h1v1h-1zM344 388h1v1h-1zM345 421h1v1h-1zM345 455h1v1h-1zM346 422h1v1h-1zM346 433h1v1h-1zM347 442h1v1h-1zM347 424h1v1h-1zM348 382h1v1h-1zM348 435h1v1h-1zM349 465h1v1h-1zM349 455h1v1h-1zM350 404h1v1h-1zM350 412h1v1h-1zM351 459h1v1h-1zM351 383h1v1h-1zM352 452h1v1h-1zM352 448h1v1h-1zM353 408h1v1h-1zM353 416h1v1h-1zM354 471h1v1h-1zM354 384h1v1h-1zM355 448h1v1h-1zM355 459h1v1h-1zM356 413h1v1h-1zM356 424h1v1h-1zM357 442h1v1h-1zM357 430h1v1h-1zM358 432h1v1h-1zM358 399h1v1h-1zM359 423h1v1h-1zM359 462h1v1h-1zM360 446h1v1h-1zM360 442h1v1h-1zM361 433h1v1h-1zM361 432h1v1h-1zM362 461h1v1h-1zM362 398h1v1h-1zM363 389h1v1h-1zM363 424h1v1h-1zM364 432h1v1h-1zM364 392h1v1h-1zM365 411h1v1h-1zM365 397h1v1h-1zM366 425h1v1h-1zM366 417h1v1h-1zM367 433h1v1h-1zM368 389h1v1h-1zM369 437h1v1h-1zM369 430h1v1h-1zM370 453h1v1h-1zM370 397h1v1h-1zM371 421h1v1h-1zM371 395h1v1h-1zM372 433h1v1h-1zM372 408h1v1h-1zM373 457h1v1h-1zM373 443h1v1h-1zM374 421h1v1h-1zM374 446h1v1h-1zM375 404h1v1h-1zM375 452h1v1h-1zM376 410h1v1h-1zM377 459h1v1h-1zM377 402h1v1h-1zM378 412h1v1h-1zM378 393h1v1h-1zM379 428h1v1h-1zM379 439h1v1h-1zM380 454h1v1h-1zM380 439h1v1h-1zM381 399h1v1h-1zM381 424h1v1h-1zM382 393h1v1h-1zM382 426h1v1h-1zM383 450h1v1h-1zM383 452h1v1h-1zM384 410h1v1h-1zM384 454h1v1h-1zM385 398h1v1h-1zM385 421h1v1h-1zM386 412h1v1h-1zM386 429h1v1h-1zM387 420h1v1h-1zM388 397h1v1h-1zM388 406h1v1h-1zM389 428h1v1h-1zM389 456h1v1h-1zM390 427h1v1h-1zM390 446h1v1h-1zM391 410h1v1h-1zM391 452h1v1h-1zM392 441h1v1h-1zM392 428h1v1h-1zM393 403h1v1h-1zM394 457h1v1h-1zM395 404h1v1h-1zM396 397h1v1h-1zM397 418h1v1h-1zM398 399h1v1h-1zM399 409h1v1h-1zM400 431h1v1h-1zM400 410h1v1h-1zM401 433h1v1h-1zM402 446h1v1h-1zM402 420h1v1h-1zM403 406h1v1h-1zM403 400h1v1h-1zM404 409h1v1h-1zM405 438h1v1h-1zM406 439h1v1h-1zM407 428h1v1h-1zM408 423h1v1h-1zM409 425h1v1h-1zM409 436h1v1h-1zM410 432h1v1h-1zM411 416h1v1h-1zM412 416h1v1h-1zM413 419h1v1h-1zM414 436h1v1h-1zM415 422h1v1h-1zM416 401h1v1h-1zM417 438h1v1h-1zM418 425h1v1h-1zM419 419h1v1h-1zM420 432h1v1h-1zM421 423h1v1h-1zM422 409h1v1h-1zM423 399h1v1h-1zM424 424h1v1h-1zM425 433h1v1h-1zM430 423h1v1h-1zM431 406h1v1h-1zM432 402h1v1h-1zM433 441h1v1h-1zM434 423h1v1h-1zM435 436h1v1h-1zM437 425h1v1h-1zM439 422h1v1h-1zM441 417h1v1h-1zM447 425h1v1h-1zM451 420h1v1h-1zM452 414h1v1h-1zM454 425h1v1h-1zM458 431h1v1h-1zM460 420h1v1h-1zM461 405h1v1h-1z" fill="#eeee7a"/>
<path d="M47.1 220.5 L49.4 229.8 L51.8 218.2 L54.0 230.6 L56.4 219.7 L58.7 226.7 L61.0 219.7 L64.2 232.2 L67.3 219.0 L70.0 223.6 L72.7 229.0 L76.6 220.5 L78.9 229.0 L81.2 219.7 L83.6 233.7 L85.9 216.6 L88.2 229.8 L90.5 220.5 L92.6 225.4 L94.7 233.1 L96.8 233.7 L99.1 226.7 L102.2 237.6 L104.9 231.1 L107.6 225.2 L110.7 224.4 L113.4 230.7 L116.1 236.8 L119.3 226.7 L122.0 231.4 L124.7 234.5 L126.8 233.2 L128.9 237.7 L131.1 240.3 L133.2 240.7 L135.3 241.3 L137.3 232.9 L139.4 234.5 L141.7 236.1 L144.1 237.5 L146.4 244.6 L150.0 240.2 L153.9 247.9 L157.0 238.6 L159.7 247.6 L162.4 251.0 L166.3 238.6 L169.0 238.0 L171.7 234.0 L175.6 248.7 L179.5 243.3 L183.4 237.0 L186.5 257.2 L190.3 249.5 L192.7 248.5 L195.0 255.7 L197.7 255.0 L200.4 245.6 L202.8 266.5 L205.9 249.5 L209.7 260.3 L212.0 252.6 L214.4 266.5 L218.3 261.9 L220.6 264.3 L222.9 259.8 L225.3 257.7 L227.6 254.9 L229.9 259.2 L232.2 269.6 L234.6 260.2 L236.9 259.6 L239.2 266.5 L243.1 260.3 L245.4 265.2 L247.8 265.7 L250.1 272.0 L252.4 279.0 L255.0 274.4 L258.1 274.4 L260.4 265.9 L262.8 283.7 L264.3 274.4 L266.4 275.0 L268.4 276.0 L270.5 282.2 L272.9 278.4 L275.2 275.2 L277.8 280.7 L280.3 289.7 L282.9 293.0 L285.2 289.5 L287.5 286.7 L289.9 282.0 L292.2 278.3 L295.3 286.0 L297.7 300.0 L300.0 290.7 L302.4 294.6 L304.7 296.1 L307.8 292.2 L308.5 303.1 L312.4 293.0 L314.8 299.3 L317.1 306.2 L319.4 296.4 L321.7 289.9 L323.3 304.7 L327.1 312.4 L329.9 313.9 L332.6 307.8 L335.7 317.1 L338.4 316.2 L341.1 307.8 L345.0 318.6 L347.3 309.3 L349.6 323.3 L352.0 322.8 L354.3 317.1 L357.4 323.3 L360.0 324.6 L362.6 327.5 L365.2 327.2 L367.8 328.8 L370.3 333.2 L373.8 331.5 L376.4 336.7 L378.4 335.2 L380.4 336.2 L382.4 338.4 L384.5 338.1 L386.7 344.4 L388.9 344.7 L391.0 341.0 L393.6 347.0 L395.8 341.5 L397.9 337.5 L401.3 354.8 L403.9 351.3 L407.3 354.8 L409.4 357.6 L411.6 354.3 L413.8 358.9 L415.9 355.6 L418.0 361.2 L420.2 361.6 L422.8 362.7 L425.4 369.2 L428.0 376.3 L430.0 375.7 L432.0 368.6 L434.0 365.1 L436.6 380.0 L439.2 387.5 L441.8 385.4 L444.3 384.9 L446.9 382.1 L449.5 385.7 L452.1 384.0 L454.7 408.1 L456.9 406.9 L459.0 403.8 L461.5 405.5" fill="none" stroke="#5ab8ee" stroke-width="1" shape-rendering="crispEdges"/>
</svg>
<div class="t" style="left:0;width:40px;text-align:right;top:163px;font-size:10.5px">90</div>
<div class="t" style="left:466px;top:163px;font-size:10.5px">45</div>
<div class="t" style="left:0;width:40px;text-align:right;top:211px;font-size:10.5px">80</div>
<div class="t" style="left:466px;top:211px;font-size:10.5px">40</div>
<div class="t" style="left:0;width:40px;text-align:right;top:258px;font-size:10.5px">70</div>
<div class="t" style="left:466px;top:258px;font-size:10.5px">35</div>
<div class="t" style="left:0;width:40px;text-align:right;top:306px;font-size:10.5px">60</div>
<div class="t" style="left:466px;top:306px;font-size:10.5px">30</div>
<div class="t" style="left:0;width:40px;text-align:right;top:353px;font-size:10.5px">50</div>
<div class="t" style="left:466px;top:353px;font-size:10.5px">25</div>
<div class="t" style="left:0;width:40px;text-align:right;top:401px;font-size:10.5px">40</div>
<div class="t" style="left:466px;top:401px;font-size:10.5px">20</div>
<div class="t" style="left:0;width:40px;text-align:right;top:449px;font-size:10.5px">30</div>
<div class="t" style="left:466px;top:449px;font-size:10.5px">15</div>
<div class="t" style="left:0;width:40px;text-align:right;top:496px;font-size:10.5px">20</div>
<div class="t" style="left:466px;top:496px;font-size:10.5px">10</div>
<div class="t" style="left:0;width:40px;text-align:right;top:544px;font-size:10.5px">10</div>
<div class="t" style="left:466px;top:544px;font-size:10.5px">5</div>
<div class="t" style="left:16.5px;width:60px;text-align:center;top:603px;font-size:10.5px">0</div>
<div class="t" style="left:57.5px;width:60px;text-align:center;top:603px;font-size:10.5px">50</div>
<div class="t" style="left:99.5px;width:60px;text-align:center;top:603px;font-size:10.5px">100</div>
<div class="t" style="left:140.5px;width:60px;text-align:center;top:603px;font-size:10.5px">150</div>
<div class="t" style="left:182.5px;width:60px;text-align:center;top:603px;font-size:10.5px">200</div>
<div class="t" style="left:223.5px;width:60px;text-align:center;top:603px;font-size:10.5px">250</div>
<div class="t" style="left:265.5px;width:60px;text-align:center;top:603px;font-size:10.5px">300</div>
<div class="t" style="left:306.5px;width:60px;text-align:center;top:603px;font-size:10.5px">350</div>
<div class="t" style="left:348.5px;width:60px;text-align:center;top:603px;font-size:10.5px">400</div>
<div class="t" style="left:389.5px;width:60px;text-align:center;top:603px;font-size:10.5px">450</div>
<div class="t" style="left:445px;top:603px;font-size:10.5px">500gB</div>
<div class="t" style="left:46px;top:156px;font-size:10.5px">MB/s</div>
<div class="t" style="left:447px;top:156px;font-size:10.5px">ms</div>
<div class="a" style="left:498px;top:149px;width:178px;height:21px;border:1px solid #2c8aae;border-radius:3px;background:linear-gradient(#eaf7fd,#d6effb 45%,#bfe4f6 55%,#cdebf8);box-shadow:inset 0 0 0 1px #8fd6f2"></div><div class="t" style="left:561px;top:154px">Запустить</div><div class="sep" style="left:489px;top:180px;width:193px"></div><svg class="a" style="left:493px;top:186px" width="14" height="14" viewBox="0 0 14 14"><circle cx="7" cy="7" r="5.8" fill="#e8f2fa" stroke="#3a6a90" stroke-width="1"/><circle cx="7" cy="7" r="3.4" fill="#1c4a78"/><circle cx="6.3" cy="6.2" r="1.2" fill="#5aa0d8"/></svg><div class="t" style="left:510px;top:188px">Чтение</div><svg class="a" style="left:493px;top:202px" width="14" height="14" viewBox="0 0 14 14"><defs><linearGradient id="rg2" x1="0" y1="0" x2="1" y2="1"><stop offset="0" stop-color="#c8c8c8"/><stop offset="1" stop-color="#f6f6f6"/></linearGradient></defs><circle cx="7" cy="7" r="5.8" fill="url(#rg2)" stroke="#8a8a8a" stroke-width="1"/></svg><div class="t" style="left:510px;top:204px">Запись</div><div class="sep" style="left:489px;top:219px;width:193px"></div><div class="cb" style="left:494px;top:228px"></div><div class="t" style="left:510px;top:229px">Короткий рабочий ход</div><div class="a" style="left:494px;top:247px;width:62px;height:20px;border:1px solid #c0c0c0;background:#fff"></div><div class="t" style="left:498px;top:252px;color:#8a8a8a">40</div><div class="a" style="left:539px;top:248px;width:16px;height:18px;border-left:1px solid #e0e0e0"></div><svg class="a" style="left:542px;top:250px" width="10" height="14"><path d="M2 5h6L5 2z M2 9h6L5 12z" fill="#a0a0a0"/></svg><div class="t" style="left:567px;top:252px">ГБ</div><div class="cb" style="left:494px;top:277px"></div><svg class="a" style="left:496px;top:279px" width="10" height="10"><path d="M1.5 5l2.5 3 5-7" stroke="#3a4a9a" stroke-width="1.6" fill="none"/></svg><div class="t" style="left:510px;top:278px">Скорость передачи данных</div><div class="sep" style="left:489px;top:291px;width:193px"></div><div class="t" style="left:494px;top:296px">Минимальная скорость</div><div class="blk" style="left:494px;top:310px;width:164px;height:14px;color:#3aa5ee">39.4 Мбайт/сек</div><div class="t" style="left:494px;top:328px">Максимальная скорость</div><div class="blk" style="left:494px;top:342px;width:164px;height:14px;color:#3aa5ee">79.9 Мбайт/сек</div><div class="t" style="left:494px;top:359px">Средняя скорость</div><div class="blk" style="left:494px;top:372px;width:164px;height:14px;color:#3aa5ee">65.4 Мбайт/сек</div><div class="sep" style="left:489px;top:395px;width:193px"></div><div class="cb" style="left:494px;top:402px"></div><svg class="a" style="left:496px;top:404px" width="10" height="10"><path d="M1.5 5l2.5 3 5-7" stroke="#3a4a9a" stroke-width="1.6" fill="none"/></svg><div class="t" style="left:510px;top:403px">Время доступа</div><div class="blk" style="left:494px;top:416px;width:164px;height:14px;color:#f0f040">13.1 мс</div><div class="cb" style="left:494px;top:436px"></div><svg class="a" style="left:496px;top:438px" width="10" height="10"><path d="M1.5 5l2.5 3 5-7" stroke="#3a4a9a" stroke-width="1.6" fill="none"/></svg><div class="t" style="left:510px;top:437px">Пиковая скорость</div><div class="blk" style="left:494px;top:450px;width:164px;height:14px;color:#fff">117.1 Мбайт/сек</div><div class="t" style="left:494px;top:470px">Загрузка процессора</div><div class="blk" style="left:494px;top:484px;width:164px;height:14px;color:#fff">2.5%</div>
</body></html>
